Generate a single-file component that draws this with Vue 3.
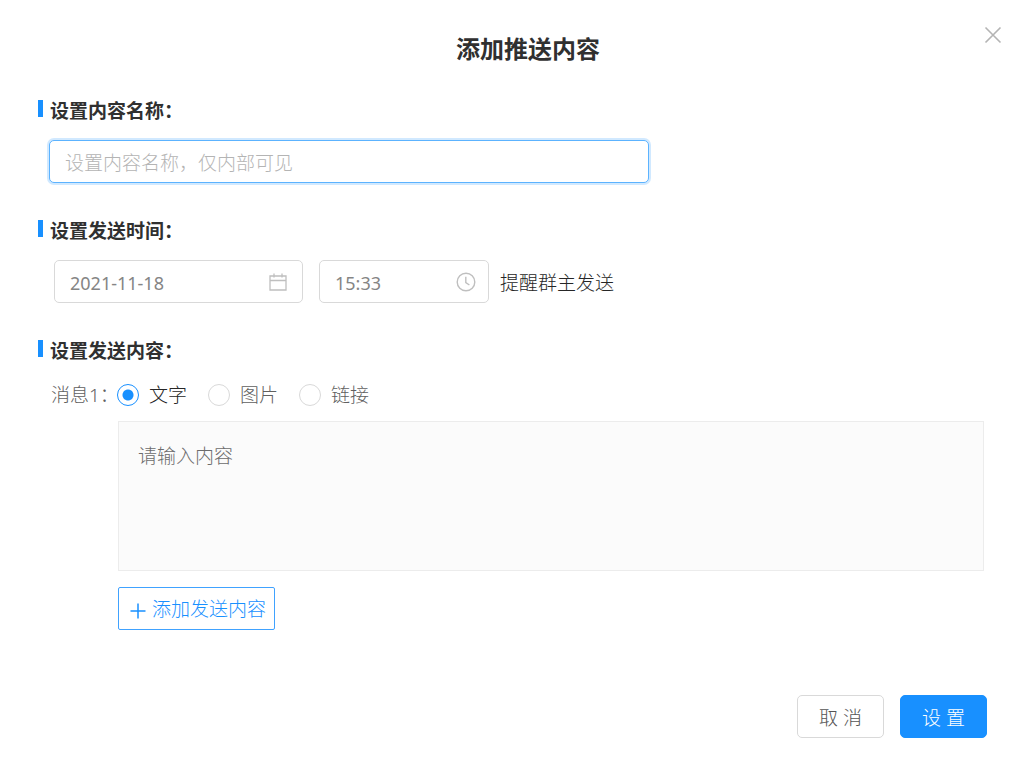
<script setup>
import { ref } from 'vue'

const name = ref('')
const date = ref('2021-11-18')
const time = ref('15:33')
const kind = ref('文字')
const kinds = ['文字', '图片', '链接']
const content = ref('')
</script>

<template>
  <form class="dialog" role="dialog" aria-labelledby="dialog-title" @submit.prevent>
    <header class="header">
      <h1 id="dialog-title">添加推送内容</h1>
      <button type="button" class="close" aria-label="关闭">
        <svg viewBox="0 0 18 18" width="18" height="18">
          <path d="M1.5 1.5 16.5 16.5M16.5 1.5 1.5 16.5" fill="none" stroke="currentColor" stroke-width="1.6" />
        </svg>
      </button>
    </header>

    <section class="section">
      <h2><label for="name">设置内容名称：</label></h2>
      <input id="name" v-model="name" class="box name" type="text" placeholder="设置内容名称，仅内部可见" />
    </section>

    <section class="section">
      <h2>设置发送时间：</h2>
      <div class="schedule">
        <label class="box picker date">
          <input v-model="date" type="text" aria-label="发送日期" />
          <svg viewBox="0 0 18 18" width="18" height="18" fill="none" stroke="currentColor" stroke-width="1.3">
            <path d="M1 3h16v14H1zM1 7.5h16M5 .5v4M13 .5v4" />
          </svg>
        </label>
        <label class="box picker time">
          <input v-model="time" type="text" aria-label="发送时间" />
          <svg viewBox="0 0 20 20" width="20" height="20" fill="none" stroke="currentColor" stroke-width="1.4">
            <circle cx="10" cy="10" r="8.8" />
            <path d="M9.8 4.8v5.8l3.6 2.4" />
          </svg>
        </label>
        <span class="hint">提醒群主发送</span>
      </div>
    </section>

    <section class="section">
      <h2>设置发送内容：</h2>
      <div class="kinds" role="radiogroup" aria-label="消息1">
        <span class="caption">消息1：</span>
        <label v-for="k in kinds" :key="k" class="kind" :class="{ chosen: kind === k }">
          <input v-model="kind" type="radio" name="kind" :value="k" />
          <span>{{ k }}</span>
        </label>
      </div>
      <div class="message">
        <textarea v-model="content" placeholder="请输入内容" aria-label="消息内容"></textarea>
        <button type="button" class="add">
          <svg viewBox="0 0 16 16" width="16" height="16">
            <path d="M8 .5v15M.5 8h15" fill="none" stroke="currentColor" stroke-width="1.5" />
          </svg>
          <span>添加发送内容</span>
        </button>
      </div>
    </section>

    <footer class="footer">
      <button type="button" class="action">取 消</button>
      <button type="submit" class="action primary">设 置</button>
    </footer>
  </form>
</template>

<style>
body {
  background: #fff;
}
</style>

<style scoped>
.dialog {
  position: relative;
  box-sizing: border-box;
  padding: 32px 37px 20px 38px;
  color: #262626;
  font: 300 19px/26px "Noto Sans", "Noto Sans CJK SC", sans-serif;
}

.dialog * {
  box-sizing: border-box;
}

input,
textarea,
button {
  font: inherit;
  color: inherit;
}

.header {
  margin-bottom: 32px;
  padding-left: 31px;
  text-align: center;
}

h1 {
  margin: 0;
  font-size: 24px;
  line-height: 34px;
  font-weight: 700;
  color: #303030;
}

.close {
  position: absolute;
  top: 26px;
  right: 22px;
  display: flex;
  padding: 0;
  border: 0;
  background: none;
  color: #b4b4b4;
}

.section {
  margin-bottom: 35px;
}

h2 {
  display: flex;
  margin: 0 0 16px;
  font-size: 19px;
  line-height: 26px;
  font-weight: 700;
  color: #303030;
}

h2::before {
  content: "";
  width: 5px;
  height: 17px;
  margin: 2px 7px 0 0;
  background: #1890ff;
}

.box {
  height: 43px;
  border: 1px solid #d9d9d9;
  border-radius: 5px;
  background: #fff;
}

.name {
  display: block;
  width: 600px;
  max-width: 100%;
  margin-left: 11px;
  padding: 2px 15px 0;
  border-color: #5cb3ff;
  outline: 0;
  box-shadow: 0 0 0 2px #d1e9ff;
}

.name::placeholder {
  color: #b4b4b4;
  opacity: 1;
}

.schedule {
  display: flex;
  align-items: center;
  padding-left: 16px;
}

.picker {
  display: flex;
  align-items: center;
  padding: 0 15px;
  color: #bfbfbf;
}

.picker input {
  flex: 1;
  min-width: 0;
  padding: 2px 0 0;
  border: 0;
  outline: 0;
  background: none;
  font-size: 18px;
  font-weight: 400;
  color: #858585;
}

.date {
  width: 249px;
  margin-right: 16px;
}

.time {
  width: 170px;
  padding-right: 12px;
  margin-right: 11px;
}

.hint {
  padding-top: 2px;
}

.kinds {
  display: flex;
  align-items: center;
  margin-top: 18px;
  color: #606060;
}

.caption {
  width: 66px;
  margin: 0 0 0 13px;
  white-space: nowrap;
}

.kind {
  display: flex;
  align-items: center;
  gap: 10px;
  margin-right: 21px;
}

.kind input {
  appearance: none;
  width: 22px;
  height: 22px;
  margin: 0;
  border: 1px solid #d9d9d9;
  border-radius: 50%;
  background: #fff;
}

.kind input:checked {
  border-color: #1890ff;
  background: radial-gradient(circle, #1890ff 5px, #fff 6px);
}

.chosen {
  color: #262626;
}

.message {
  display: flex;
  flex-direction: column;
  align-items: flex-start;
  gap: 16px;
  margin-top: 13px;
  padding: 0 3px 0 80px;
}

textarea {
  display: block;
  width: 100%;
  height: 150px;
  padding: 21px 19px;
  border: 1px solid #ececec;
  border-radius: 0;
  outline: 0;
  background: #fbfbfb;
  resize: none;
}

textarea::placeholder {
  color: #6c6c6c;
  opacity: 1;
}

.add {
  display: flex;
  align-items: center;
  gap: 6px;
  height: 43px;
  padding: 0 8px 0 11px;
  border: 1px solid #40a2ff;
  border-radius: 2px;
  background: #fff;
  color: #1890ff;
}

.add svg {
  margin-top: 4px;
}

.footer {
  display: flex;
  justify-content: flex-end;
  gap: 16px;
  margin-top: 65px;
}

.action {
  min-width: 87px;
  height: 43px;
  padding: 2px 20px 0;
  border: 1px solid #d9d9d9;
  border-radius: 5px;
  background: #fff;
  color: #555;
}

.primary {
  border-color: #1890ff;
  background: #1890ff;
  color: #fff;
}
</style>
